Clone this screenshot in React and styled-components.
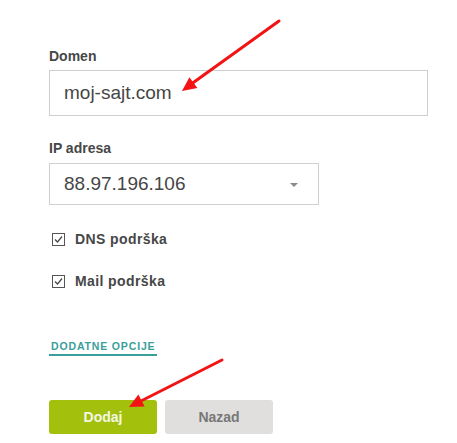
import styled, { createGlobalStyle } from "styled-components";

const Global = createGlobalStyle`
  html, body { margin: 0; padding: 0; background: #fff; }
  body { font-family: "Liberation Sans", Arial, sans-serif; }
`;

const Page = styled.div`
  position: relative;
  width: 457px;
  height: 443px;
  overflow: hidden;
  padding: 48px 0 0 49px;
  box-sizing: border-box;
`;

const Field = styled.div`
  margin-bottom: ${(p) => p.$mb || 0}px;
`;

const Label = styled.div`
  font-size: 14px;
  line-height: 16px;
  font-weight: bold;
  color: #474747;
  margin-bottom: ${(p) => p.$mb || 6}px;
`;

const Box = styled.div`
  position: relative;
  display: flex;
  align-items: center;
  box-sizing: border-box;
  width: ${(p) => p.$w}px;
  height: ${(p) => p.$h}px;
  border: 1px solid #cfcfcf;
  padding-left: 14px;
  font-size: 19px;
  color: #464646;
`;

const Caret = styled.span`
  position: absolute;
  right: 20px;
  top: 50%;
  margin-top: -1px;
  width: 0;
  height: 0;
  border-left: 4px solid transparent;
  border-right: 4px solid transparent;
  border-top: 4px solid #8a8a8a;
`;

const Check = styled.label`
  display: flex;
  align-items: center;
  gap: 10px;
  margin-top: 26px;
  padding-left: 3px;
  font-size: 14px;
  line-height: 16px;
  font-weight: bold;
  letter-spacing: 0.4px;
  color: #474747;
`;

const MoreLink = styled.a`
  display: inline-block;
  margin-top: 51px;
  padding: 0 2px 2px;
  border-bottom: 2px solid #3a9e9b;
  font-size: 10.5px;
  line-height: 12px;
  font-weight: bold;
  letter-spacing: 0.85px;
  color: #3a9e9b;
  text-decoration: none;
`;

const Buttons = styled.div`
  display: flex;
  gap: 8px;
  margin-top: 44px;
`;

const Button = styled.button`
  width: 108px;
  height: 34px;
  border: none;
  border-radius: 3px;
  font-family: inherit;
  font-size: 14px;
  font-weight: bold;
  background: ${(p) => (p.$primary ? "#a3c00c" : "#e0dfdd")};
  color: ${(p) => (p.$primary ? "#f4f7e4" : "#777")};
  padding: 0;
`;

const Overlay = styled.svg`
  position: absolute;
  left: 0;
  top: 0;
  pointer-events: none;
`;

function CheckIcon() {
  return (
    <svg width="13" height="13" viewBox="0 0 13 13">
      <rect x="0.5" y="0.5" width="12" height="12" fill="#fff" stroke="#555" />
      <path d="M3 6.5 L5.5 9 L10 3.5" fill="none" stroke="#444" strokeWidth="1.2" />
    </svg>
  );
}

export default function App() {
  return (
    <Page>
      <Global />
      <Field $mb={24}>
        <Label>Domen</Label>
        <Box $w={379} $h={46}>moj-sajt.com</Box>
      </Field>
      <Field>
        <Label $mb={7}>IP adresa</Label>
        <Box $w={270} $h={42}>
          88.97.196.106
          <Caret />
        </Box>
      </Field>
      <Check>
        <CheckIcon />
        DNS podrška
      </Check>
      <Check>
        <CheckIcon />
        Mail podrška
      </Check>
      <MoreLink href="#">DODATNE OPCIJE</MoreLink>
      <Buttons>
        <Button $primary>Dodaj</Button>
        <Button>Nazad</Button>
      </Buttons>
      <Overlay width="457" height="443">
        <g stroke="#f21414" strokeWidth="3" strokeLinecap="round">
          <line x1="279" y1="21" x2="192" y2="83.5" />
          <line x1="222" y1="360" x2="140" y2="401.5" />
        </g>
        <g fill="#f21414">
          <polygon points="182,91 197.4,88 189.4,77.2" />
          <polygon points="129,407 144.6,406.6 138.4,394.6" />
        </g>
      </Overlay>
    </Page>
  );
}
